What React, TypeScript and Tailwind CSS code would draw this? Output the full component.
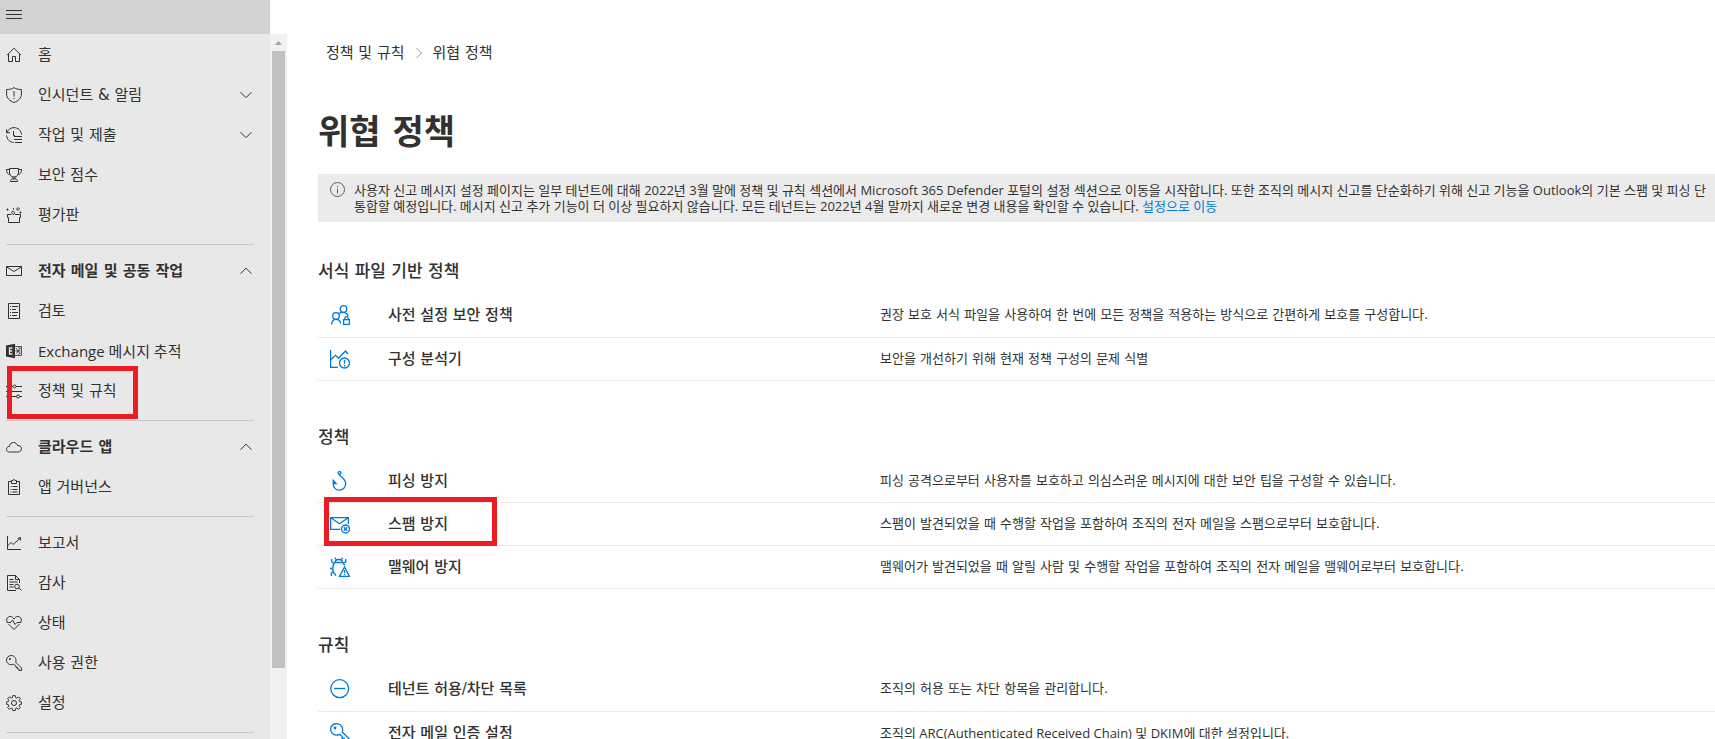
import type { ReactNode } from 'react'

type NavItem = {
  label: string
  icon: ReactNode
  expand?: 'down' | 'up'
  bold?: boolean
  latin?: boolean
  marked?: boolean
}

type Policy = {
  name: string
  description: string
  icon: ReactNode
  latin?: boolean
  marked?: boolean
}

const LATIN_FONT = "font-['Open_Sans','Noto_Sans_CJK_KR',sans-serif]"

function NavIcon({ children }: { children: ReactNode }) {
  return (
    <svg viewBox="0 0 16 16" className="size-4 shrink-0" fill="none" stroke="#323130" aria-hidden="true">
      {children}
    </svg>
  )
}

function PolicyIcon({ children }: { children: ReactNode }) {
  return (
    <svg viewBox="0 0 20 20" className="size-5" fill="none" stroke="#0078d4" strokeWidth="1.3" aria-hidden="true">
      {children}
    </svg>
  )
}

function Chevron({ direction }: { direction: 'down' | 'up' }) {
  return (
    <svg viewBox="0 0 12 12" className="size-3 shrink-0" fill="none" stroke="#323130" aria-hidden="true">
      <path d={direction === 'down' ? 'M.5 3.2 6 8.7l5.5-5.5' : 'M.5 8.7 6 3.2l5.5 5.5'} />
    </svg>
  )
}

const NAV_GROUPS: NavItem[][] = [
  [
    {
      label: '홈',
      icon: <NavIcon><path d="M1 8.2 8 1.2l7 7M2.500 7v7.500h4v-5h3v5h4V7" /></NavIcon>,
    },
    {
      label: '인시던트 & 알림',
      expand: 'down',
      icon: <NavIcon><path d="M8 .6C6.2 2 3.5 2.5.6 2.5V7c0 4 3 6.800 7.400 8.500 4.400-1.700 7.400-4.500 7.400-8.500V2.500C12.500 2.500 9.800 2 8 .6ZM8 4v5.500M8 10.800V12" /></NavIcon>,
    },
    {
      label: '작업 및 제출',
      expand: 'down',
      icon: (
        <NavIcon>
          <path d="M1 5.500C2.200 2.500 4.800.6 8 .6c4 0 7.300 3 7.500 7M.6 2.200v3.600h3.600M.6 8.500c.3 3.700 3 6.600 7 7M7.500 4v4.500H9M8 9.500h8M8 12.500h8M9 15.500h7" />
        </NavIcon>
      ),
    },
    {
      label: '보안 점수',
      icon: (
        <NavIcon>
          <path d="M3.500 1.500h9V5c0 3-1.500 5-4.500 5S3.500 8 3.500 5ZM3.500 2.500h-3c0 3 1 4.800 3.300 5M12.500 2.500h3c0 3-1 4.800-3.300 5M7 10v2M9 10v2M4.500 14.500c0-1.700 1-2.500 2-2.500h3c1 0 2 .8 2 2.500Z" />
        </NavIcon>
      ),
    },
    {
      label: '평가판',
      icon: (
        <NavIcon>
          <path d="M5.500 7.500h-4v3h1v5h11v-5h1v-3H9M7 8c1.500-1 2-2.500 1.200-3.300-.8-.8-2.300-.6-2.600.4-.3 1 .6 1.800 1.600 1.500M12 .5 13.500 2 12 3.500 10.500 2ZM1.500 1.500v2M.5 2.500h2M14.500 4.500v2M13.500 5.500h2M7.500 1v1.500" />
        </NavIcon>
      ),
    },
  ],
  [
    {
      label: '전자 메일 및 공동 작업',
      expand: 'up',
      bold: true,
      icon: <NavIcon><path d="M.5 3.500h15v9H.5ZM.5 3.800 8 8.500l7.500-4.700" /></NavIcon>,
    },
    {
      label: '검토',
      icon: <NavIcon><path d="M2.500.5h11v15h-11ZM4 3.500h1M6 3.500h6M4 6.500h1M6 6.500h4M4 9.500h1M6 9.500h6M4 12.500h1M6 12.500h5" /></NavIcon>,
    },
    {
      label: 'Exchange 메시지 추적',
      latin: true,
      icon: (
        <NavIcon>
          <path d="M0 2.500 9 .7v14.600L0 13.500Z" fill="#323130" stroke="none" />
          <path d="M6.500 5h-3v6h3M3.500 8h2.700" stroke="#e8e8e8" strokeWidth="1.3" />
          <path d="M9 3.500h6.500v9H9M10 5l4 6M14.500 4.500l-4 6M9.500 8h5M12 4l2.500 2M12 12l2.500-2" strokeWidth=".8" />
        </NavIcon>
      ),
    },
    {
      label: '정책 및 규칙',
      marked: true,
      icon: (
        <NavIcon>
          <path d="M0 3.500h7M10 3.500h6M0 8.500h3M6 8.500h10M0 13.500h10.500M13.500 13.500H16" />
          <circle cx="8.5" cy="3.5" r="1.5" />
          <circle cx="4.5" cy="8.5" r="1.5" />
          <circle cx="12" cy="13.5" r="1.5" />
        </NavIcon>
      ),
    },
  ],
  [
    {
      label: '클라우드 앱',
      expand: 'up',
      bold: true,
      icon: <NavIcon><path d="M3.500 13C1.800 13 .5 11.800.5 10.300.5 8.700 1.700 7.500 3.400 7.500 3.600 5 5.400 3.500 7.500 3.500c2 0 3.500 1.200 4 3 2.300-.2 4 1.200 4 3.200s-1.500 3.300-3.500 3.300Z" /></NavIcon>,
    },
    {
      label: '앱 거버넌스',
      icon: <NavIcon><path d="M5.500 2.500h-3v13h11v-13h-3M5.500 4.500v-3h1.500C7 .2 9 .2 9 1.500h1.500v3ZM4.500 7.500h1M6.500 7.500h5M4.500 10.500h1M6.500 10.500h5M4.500 13h1M6.500 13h5" /></NavIcon>,
    },
  ],
  [
    {
      label: '보고서',
      icon: <NavIcon><path d="M1.500 1v13.500H15M1.500 11 5 7.500l2 2L14.500 3M11.500 3.500l3-1v3" /></NavIcon>,
    },
    {
      label: '감사',
      icon: (
        <NavIcon>
          <path d="M10 15.500H1.500V.5h8l4 4V8M9.500.5v4h4M3.500 4.500h4M3.500 7h8M3.500 9.500h4M3.500 12h4M13 13l2.500 2.500" />
          <circle cx="11" cy="11.5" r="2.3" />
        </NavIcon>
      ),
    },
    {
      label: '상태',
      icon: <NavIcon><path d="M1.300 7.200C-.4 4 1.500 1.500 4.200 1.500 6 1.500 7.200 2.500 8 4c.8-1.500 2-2.500 3.800-2.500 2.700 0 4.600 2.500 2.900 5.700M2.500 9 8 14.500 13.500 9M.8 7.500h3.700L6.500 5 9 9.500l2-2h4.200" /></NavIcon>,
    },
    {
      label: '사용 권한',
      icon: (
        <NavIcon>
          <path d="M9.700 7.200 15.500 13v2.500H13V14h-1.500v-1.500H10V11L7.500 9.200C4 10.800.5 8.500.5 5.200c0-2.600 2.100-4.700 4.700-4.700C8.500.5 10.800 3.700 9.700 7.200Z" />
          <circle cx="4" cy="4" r=".7" />
        </NavIcon>
      ),
    },
    {
      label: '설정',
      icon: (
        <NavIcon>
          <path d="M6.800.6h2.400l.4 2 1.200.5 1.800-1.200 1.700 1.700-1.200 1.800.5 1.200 2 .4v2.200l-2 .4-.5 1.200 1.200 1.800-1.700 1.700-1.800-1.200-1.200.5-.4 2H6.800l-.4-2-1.200-.5-1.800 1.200-1.700-1.700 1.200-1.800-.5-1.200-2-.4V7l2-.4.5-1.200-1.200-1.800 1.700-1.700 1.800 1.200 1.200-.5Z" />
          <circle cx="8" cy="8" r="2.5" />
        </NavIcon>
      ),
    },
  ],
]

const SECTIONS: { title: string; policies: Policy[] }[] = [
  {
    title: '서식 파일 기반 정책',
    policies: [
      {
        name: '사전 설정 보안 정책',
        description: '권장 보호 서식 파일을 사용하여 한 번에 모든 정책을 적용하는 방식으로 간편하게 보호를 구성합니다.',
        icon: (
          <PolicyIcon>
            <circle cx="13.5" cy="4" r="3.3" />
            <circle cx="6" cy="11" r="3.3" />
            <path d="M1.500 19.500c.3-3 2-5.200 4.500-5.200s4.300 1.700 4.700 4.200M9 8.500c1.200-1 2.700-1.300 4.500-1.200 2.300.2 4 1.500 4.600 3.700M13.600 14.600h5.800v4.800h-5.800ZM14.800 14.500v-1.300c0-2.200 3.400-2.200 3.400 0v1.300" />
          </PolicyIcon>
        ),
      },
      {
        name: '구성 분석기',
        description: '보안을 개선하기 위해 현재 정책 구성의 문제 식별',
        icon: (
          <PolicyIcon>
            <circle cx="14.5" cy="14" r="5" />
            <path d="M.6 1v17.400H8M1 10.500l4.500-4.200 3 3L15.500 2l2.500 3M14.500 10.800v4M14.500 16v1.400" />
          </PolicyIcon>
        ),
      },
    ],
  },
  {
    title: '정책',
    policies: [
      {
        name: '피싱 방지',
        description: '피싱 공격으로부터 사용자를 보호하고 의심스러운 메시지에 대한 보안 팁을 구성할 수 있습니다.',
        icon: (
          <PolicyIcon>
            <circle cx="9.5" cy="2" r="1.4" />
            <path d="M9.500 3.400c0 2.600 6.200 4 6.200 9.200 0 3.800-2.800 6.600-6.300 6.600-3.600 0-6.200-2.800-6.200-6.200V9.500l3 3.200H3.500" />
          </PolicyIcon>
        ),
      },
      {
        name: '스팸 방지',
        description: '스팸이 발견되었을 때 수행할 작업을 포함하여 조직의 전자 메일을 스팸으로부터 보호합니다.',
        marked: true,
        icon: (
          <PolicyIcon>
            <path d="M10 15.400H.6V3.600h17.800V10M.8 3.800l8.700 6 8.700-6" />
            <circle cx="15.500" cy="15" r="4" />
            <path d="m13.800 13.300 3.400 3.400M17.200 13.300l-3.400 3.400" />
          </PolicyIcon>
        ),
      },
      {
        name: '맬웨어 방지',
        description: '맬웨어가 발견되었을 때 알릴 사람 및 수행할 작업을 포함하여 조직의 전자 메일을 맬웨어로부터 보호합니다.',
        icon: (
          <PolicyIcon>
            <path d="M4.500 5.500C3 7.500 2.800 9.500 2.800 11.500c0 2.700.8 5 3.200 6.900M4.500 5.500h8.500M5 5.500C5 1.500 12.500 1.500 12.500 5.500c1 1 1.600 1.800 1.900 2.800M6.300 2.800 5 .6M11.200 2.800 12.500.6M4 6.500 1.800 5V2M13.500 6l2.200-1V2M2.800 11.500H0M3.300 14.500l-2 1.500v3" />
            <path d="m14.500 10 5 9.400h-10ZM14.500 13v3.300M14.500 17.200v1" />
          </PolicyIcon>
        ),
      },
    ],
  },
  {
    title: '규칙',
    policies: [
      {
        name: '테넌트 허용/차단 목록',
        description: '조직의 허용 또는 차단 항목을 관리합니다.',
        icon: (
          <PolicyIcon>
            <circle cx="9.7" cy="9.7" r="9" />
            <path d="M4 9.500h11.400" />
          </PolicyIcon>
        ),
      },
      {
        name: '전자 메일 인증 설정',
        description: '조직의 ARC(Authenticated Received Chain) 및 DKIM에 대한 설정입니다.',
        latin: true,
        icon: (
          <PolicyIcon>
            <path d="m12.300 9 7.100 7v3.400h-3.200v-2h-2v-2h-2v-1.800l-2.800-2.300C5 13.500.6 10.500.6 6.500.6 3.200 3.200.6 6.500.6c4.200 0 7.200 4.200 5.800 8.400Z" />
            <circle cx="5" cy="5" r=".8" fill="#0078d4" />
          </PolicyIcon>
        ),
      },
    ],
  },
]

function NavRow({ item }: { item: NavItem }) {
  const rowClass = 'flex h-10 w-full items-center gap-4 pt-0.5 pr-[18px] pl-[6px] text-left'
  const content = (
    <>
      {item.icon}
      <span className={`flex-1 ${item.bold ? 'font-bold' : ''} ${item.latin ? LATIN_FONT : ''}`}>{item.label}</span>
      {item.expand && <Chevron direction={item.expand} />}
    </>
  )

  return (
    <li className="relative">
      {item.expand
        ? <button type="button" aria-expanded={item.expand === 'up'} className={rowClass}>{content}</button>
        : <a href="#" className={rowClass}>{content}</a>
      }
      {item.marked && (
        <span className="pointer-events-none absolute -top-1 left-[7px] h-[53px] w-[131px] border-5 border-[#ed1c24]" />
      )}
    </li>
  )
}

function Sidebar() {
  return (
    <div className="flex w-[287px] shrink-0 flex-col">
      <div className="flex h-[34px] w-[270px] shrink-0 items-start bg-[#d2d2d2] pt-[6px] pl-[6px]">
        <button type="button" aria-label="메뉴">
          <NavIcon><path d="M0 4.500h16M0 8.500h16M0 12.500h16" /></NavIcon>
        </button>
      </div>
      <div className="flex min-h-0 flex-1">
        <nav className="flex-1 overflow-hidden bg-[#e8e8e8] font-['DejaVu_Sans','Noto_Sans_CJK_KR',sans-serif] text-[15px]">
          {NAV_GROUPS.map((group, i) => (
            <ul key={i} className="mb-[5px] after:mt-[10px] after:mr-4 after:ml-[6px] after:block after:h-px after:bg-[#c8c8c8]">
              {group.map(item => <NavRow key={item.label} item={item} />)}
            </ul>
          ))}
        </nav>
        <div className="flex w-[17px] flex-col items-center bg-[#f1f1f1]">
          <svg viewBox="0 0 17 17" className="size-[17px] shrink-0" aria-hidden="true">
            <path d="M5 11 8.500 7l3.500 4Z" fill="#a3a3a3" />
          </svg>
          <div className="h-7/8 w-[13px] bg-[#c1c1c1]" />
        </div>
      </div>
    </div>
  )
}

function PolicySection({ title, policies }: { title: string; policies: Policy[] }) {
  return (
    <section className="mb-11 font-['DejaVu_Sans','Noto_Sans_CJK_KR',sans-serif]">
      <h2 className="mb-[11px] text-[17px] leading-6 font-medium">{title}</h2>
      <table className="w-full table-fixed border-collapse text-left">
        <tbody>
          {policies.map(policy => (
            <tr key={policy.name} className="h-[43px] border-b border-[#eaeaea]">
              <td className="relative w-[70px] pl-3">
                {policy.icon}
                {policy.marked && (
                  <span className="pointer-events-none absolute -top-[6px] left-[6px] h-[49px] w-[173px] border-5 border-[#ed1c24]" />
                )}
              </td>
              <th scope="row" className="w-[492px] text-[15px] leading-5 font-medium">
                <a href="#">{policy.name}</a>
              </th>
              <td className={`text-[13px] leading-5 whitespace-nowrap ${policy.latin ? LATIN_FONT : ''}`}>
                {policy.description}
              </td>
            </tr>
          ))}
        </tbody>
      </table>
    </section>
  )
}

export default function App() {
  return (
    <div lang="ko" className="flex h-screen overflow-hidden bg-white font-['Open_Sans','Noto_Sans_CJK_KR',sans-serif] text-[#323130]">
      <Sidebar />
      <main className="min-w-0 flex-1 overflow-hidden pt-[41px] pl-[31px]">
        <nav aria-label="이동 경로" className="flex items-center gap-2 pl-2 font-['DejaVu_Sans','Noto_Sans_CJK_KR',sans-serif] text-[15px] leading-6">
          <a href="#">정책 및 규칙</a>
          <svg viewBox="0 0 12 12" className="size-3" fill="none" stroke="#8a9a9a" aria-hidden="true">
            <path d="m3.500 1 5 5-5 5" />
          </svg>
          <span>위협 정책</span>
        </nav>
        <h1 className="mt-[43px] mb-[18px] font-['DejaVu_Sans','Noto_Sans_CJK_KR',sans-serif] text-[34px] leading-12 font-bold">위협 정책</h1>
        <div className="mb-[37px] flex gap-2 bg-[#ebebeb] py-2 pl-3 text-[13px] leading-4">
          <svg viewBox="0 0 16 16" className="size-4 shrink-0" fill="none" stroke="#605e5c" aria-hidden="true">
            <circle cx="7.5" cy="7.5" r="7" />
            <path d="M7.500 6.500v5M7.500 4v1.200" />
          </svg>
          <p className="whitespace-nowrap">
            사용자 신고 메시지 설정 페이지는 일부 테넌트에 대해 2022년 3월 말에 정책 및 규칙 섹션에서 Microsoft 365 Defender 포털의 설정 섹션으로 이동을 시작합니다. 또한 조직의 메시지 신고를 단순화하기 위해 신고 기능을 Outlook의 기본 스팸 및 피싱 단
            <br />
            통합할 예정입니다. 메시지 신고 추가 기능이 더 이상 필요하지 않습니다. 모든 테넌트는 2022년 4월 말까지 새로운 변경 내용을 확인할 수 있습니다.{' '}
            <a href="#" className="text-[#0078d4]">설정으로 이동</a>
          </p>
        </div>
        {SECTIONS.map(section => <PolicySection key={section.title} {...section} />)}
      </main>
    </div>
  )
}
